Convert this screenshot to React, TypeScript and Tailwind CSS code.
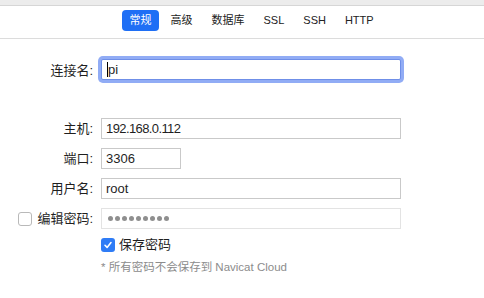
import { useState } from "react";

const tabs = ["常规", "高级", "数据库", "SSL", "SSH", "HTTP"];

function Dots() {
  return (
    <div className="flex items-center gap-[2px]">
      {Array.from({ length: 9 }).map((_, i) => (
        <span key={i} className="block h-[5px] w-[5px] rounded-full bg-[#8f8f8f]" />
      ))}
    </div>
  );
}

export default function App() {
  const [active] = useState(0);
  const [savePwd, setSavePwd] = useState(true);

  const font = { fontFamily: '"Liberation Sans", "Noto Sans CJK SC", sans-serif' };

  return (
    <div className="h-[298px] w-[484px] overflow-hidden bg-white text-[13px] text-[#1f1f1f]" style={font}>
      {/* window chrome strip */}
      <div className="h-[6px] border-b border-[#d6d6d6] bg-[#ececec]" />

      {/* tabs */}
      <div className="flex h-[33px] items-start gap-[4px] border-b border-[#dcdcdc] pl-[122px] pt-[4px]">
        {tabs.map((t, i) => (
          <div
            key={t}
            className={
              i === active
                ? "flex h-[21px] items-center rounded-[4px] bg-[#1f6ff5] px-[7.5px] text-[11px] text-white"
                : "flex h-[21px] items-center px-[7.5px] text-[11px] text-[#222]"
            }
          >
            {t}
          </div>
        ))}
      </div>

      {/* form */}
      <div className="grid grid-cols-[93px_300px] gap-x-[8px] gap-y-[9px] pt-[20px]">
        <div className="flex h-[21px] items-center justify-end pt-[3px]">连接名:</div>
        <div className="flex h-[21px] items-center rounded-[2px] border border-[#6f8fe8] bg-white pl-[5px] shadow-[0_0_0_3px_#91acf5]">
          <span className="h-[15px] w-[1px] bg-black" />
          <span>pi</span>
        </div>

        <div className="col-span-2 h-[20px]" />

        <div className="flex h-[21px] items-center justify-end">主机:</div>
        <div className="flex h-[21px] items-center border border-[#c9c9c9] pl-[4px] tracking-[-0.6px]">192.168.0.112</div>

        <div className="flex h-[21px] items-center justify-end">端口:</div>
        <div className="flex h-[21px] w-[80px] items-center border border-[#c9c9c9] pl-[4px]">3306</div>

        <div className="flex h-[21px] items-center justify-end">用户名:</div>
        <div className="flex h-[21px] items-center border border-[#c9c9c9] pl-[4px]">root</div>

        <div className="flex h-[21px] items-center justify-end gap-[5px]">
          <span className="block h-[14px] w-[14px] rounded-[3px] border border-[#b9b9b9] bg-white" />
          <span>编辑密码:</span>
        </div>
        <div className="flex h-[21px] items-center border border-[#e3e3e3] pl-[6px]">
          <Dots />
        </div>

        <div />
        <div className="flex h-[14px] items-center gap-[4px]">
          <button
            onClick={() => setSavePwd((v) => !v)}
            className={
              savePwd
                ? "flex h-[14px] w-[14px] items-center justify-center rounded-[3px] bg-[#2f7cf6]"
                : "h-[14px] w-[14px] rounded-[3px] border border-[#b9b9b9] bg-white"
            }
          >
            {savePwd && (
              <svg width="10" height="10" viewBox="0 0 10 10" fill="none">
                <path d="M2 5.3 L4.1 7.4 L8 2.6" stroke="white" strokeWidth="1.6" strokeLinecap="round" strokeLinejoin="round" />
              </svg>
            )}
          </button>
          <span>保存密码</span>
        </div>

        <div />
        <div className="-mt-[1px] text-[11.5px] leading-[14px] text-[#8c8c8c]">* 所有密码不会保存到 Navicat Cloud</div>
      </div>
    </div>
  );
}
